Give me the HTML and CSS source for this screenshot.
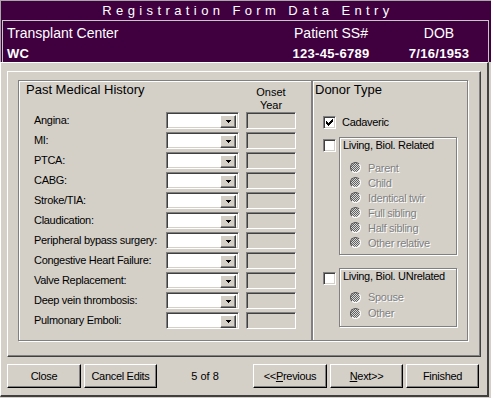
FILE: index.html
```html
<!doctype html>
<html>
    <head>
        <title>Registration Form Data Entry</title>
        <link rel="stylesheet" href="styles.css">
    </head>
    <body>
        <div class="window">
            <header class="banner">
                <h1 class="title">Registration Form Data Entry</h1>
                <div class="patient">
                    <span>Transplant Center</span>
                    <span class="mid">Patient SS#</span>
                    <span class="mid">DOB</span>
                    <b class="value">WC</b>
                    <b class="value mid">123-45-6789</b>
                    <b class="value mid">7/16/1953</b>
                </div>
            </header>

            <div class="form-area">
                <main class="panel">
                    <section class="group history">
                        <h2 class="group-title">Past Medical History</h2>
                        <div class="onset-head">Onset<br>Year</div>

                        <label class="row-label">Angina:</label>
                        <div class="combo"><span class="drop"><svg width="5" height="3"><path d="M0 0h5v1h-1v1h-1v1h-1v-1h-1v-1h-1z"/></svg></span></div>
                        <div class="year"></div>

                        <label class="row-label">MI:</label>
                        <div class="combo"><span class="drop"><svg width="5" height="3"><path d="M0 0h5v1h-1v1h-1v1h-1v-1h-1v-1h-1z"/></svg></span></div>
                        <div class="year"></div>

                        <label class="row-label">PTCA:</label>
                        <div class="combo"><span class="drop"><svg width="5" height="3"><path d="M0 0h5v1h-1v1h-1v1h-1v-1h-1v-1h-1z"/></svg></span></div>
                        <div class="year"></div>

                        <label class="row-label">CABG:</label>
                        <div class="combo"><span class="drop"><svg width="5" height="3"><path d="M0 0h5v1h-1v1h-1v1h-1v-1h-1v-1h-1z"/></svg></span></div>
                        <div class="year"></div>

                        <label class="row-label">Stroke/TIA:</label>
                        <div class="combo"><span class="drop"><svg width="5" height="3"><path d="M0 0h5v1h-1v1h-1v1h-1v-1h-1v-1h-1z"/></svg></span></div>
                        <div class="year"></div>

                        <label class="row-label">Claudication:</label>
                        <div class="combo"><span class="drop"><svg width="5" height="3"><path d="M0 0h5v1h-1v1h-1v1h-1v-1h-1v-1h-1z"/></svg></span></div>
                        <div class="year"></div>

                        <label class="row-label">Peripheral bypass surgery:</label>
                        <div class="combo"><span class="drop"><svg width="5" height="3"><path d="M0 0h5v1h-1v1h-1v1h-1v-1h-1v-1h-1z"/></svg></span></div>
                        <div class="year"></div>

                        <label class="row-label">Congestive Heart Failure:</label>
                        <div class="combo"><span class="drop"><svg width="5" height="3"><path d="M0 0h5v1h-1v1h-1v1h-1v-1h-1v-1h-1z"/></svg></span></div>
                        <div class="year"></div>

                        <label class="row-label">Valve Replacement:</label>
                        <div class="combo"><span class="drop"><svg width="5" height="3"><path d="M0 0h5v1h-1v1h-1v1h-1v-1h-1v-1h-1z"/></svg></span></div>
                        <div class="year"></div>

                        <label class="row-label">Deep vein thrombosis:</label>
                        <div class="combo"><span class="drop"><svg width="5" height="3"><path d="M0 0h5v1h-1v1h-1v1h-1v-1h-1v-1h-1z"/></svg></span></div>
                        <div class="year"></div>

                        <label class="row-label">Pulmonary Emboli:</label>
                        <div class="combo"><span class="drop"><svg width="5" height="3"><path d="M0 0h5v1h-1v1h-1v1h-1v-1h-1v-1h-1z"/></svg></span></div>
                        <div class="year"></div>
                    </section>

                    <section class="group donor">
                        <h2 class="group-title">Donor Type</h2>

                        <div class="check-row cadaveric">
                            <span class="checkbox"><svg width="7" height="7"><path d="M0 2h1v1h1v1h1v-1h1v-1h1v-1h1v-1h1v3h-1v1h-1v1h-1v1h-1v1h-1v-1h-1v-1h-1z"/></svg></span>
                            <span>Cadaveric</span>
                        </div>

                        <div class="check-row option">
                            <span class="checkbox"></span>
                            <div class="subgroup">
                                <div class="subgroup-title">Living, Biol. Related</div>
                                <ul class="radios">
                                    <li><span class="radio"></span>Parent</li>
                                    <li><span class="radio"></span>Child</li>
                                    <li><span class="radio"></span>Identical twir</li>
                                    <li><span class="radio"></span>Full sibling</li>
                                    <li><span class="radio"></span>Half sibling</li>
                                    <li><span class="radio"></span>Other relative</li>
                                </ul>
                            </div>
                        </div>

                        <div class="check-row option unrelated">
                            <span class="checkbox"></span>
                            <div class="subgroup">
                                <div class="subgroup-title">Living, Biol. UNrelated</div>
                                <ul class="radios tall">
                                    <li><span class="radio"></span>Spouse</li>
                                    <li><span class="radio"></span>Other</li>
                                </ul>
                            </div>
                        </div>
                    </section>
                </main>

                <footer class="actions">
                    <button class="btn wide">Close</button>
                    <button class="btn">Cancel Edits</button>
                    <span class="status">5 of 8</span>
                    <button class="btn wide">&lt;&lt;<u>P</u>revious</button>
                    <button class="btn"><u>N</u>ext&gt;&gt;</button>
                    <button class="btn">Finished</button>
                </footer>
            </div>
        </div>
    </body>
</html>
```

FILE: styles.css
```css
:root {
    --face: #d4d0c8;
    --shadow: #808080;
    --dark: #404040;
    --light: #ffffff;
    --purple: #400040;
    --disabled: #808080;
}

body {
    margin: 0;
}

.window {
    width: 491px;
    height: 398px;
    display: flex;
    flex-direction: column;
    background: var(--face);
    font-family: "Liberation Sans", Arial, sans-serif;
    color: #000;
}

/* purple patient banner */
.banner {
    height: 62px;
    box-sizing: border-box;
    background: var(--purple);
    color: #fff;
    border-top: 1px solid #a8a8a8;
    border-left: 1px solid #a8a8a8;
}

.title {
    margin: 0;
    height: 19px;
    font-size: 13px;
    font-weight: normal;
    line-height: 19px;
    letter-spacing: 4.4px;
    padding-left: 4px;
    text-align: center;
}

.patient {
    display: grid;
    grid-template-columns: 1fr 90px 90px;
    grid-auto-rows: 20px;
    column-gap: 18px;
    align-items: center;
    margin: 0 2px 0 1px;
    padding: 2px 4px 0 4px;
    height: 42px;
    box-sizing: border-box;
    border: 1px solid #c8c8c8;
    border-bottom: none;
    font-size: 14px;
}

.patient .mid {
    text-align: center;
}

.patient .value {
    font-size: 13px;
    letter-spacing: 0.3px;
}

/* grey form body */
.form-area {
    flex: 1;
    margin: 0 2px 1px 0;
    padding: 8px 0 0 6px;
    border-top: 1px solid var(--light);
    border-left: 1px solid var(--light);
    border-right: 2px solid var(--dark);
    border-bottom: 2px solid var(--dark);
}

.panel {
    display: flex;
    width: 474px;
    height: 286px;
    box-sizing: border-box;
    padding: 8px 0 0 10px;
    border: 1px solid;
    border-color: var(--light) var(--dark) var(--dark) var(--light);
    box-shadow: inset -1px -1px var(--shadow);
}

.group {
    height: 261px;
    box-sizing: border-box;
    border: 1px solid var(--shadow);
    box-shadow: inset 1px 1px var(--light), 1px 1px var(--light);
}

.group-title {
    margin: 0;
    font-size: 13px;
    font-weight: normal;
    line-height: 16px;
}

.history {
    width: 294px;
    display: grid;
    grid-template-columns: 133px 73px 50px;
    grid-template-rows: 27px;
    grid-auto-rows: 17px;
    column-gap: 7px;
    row-gap: 3px;
    align-content: start;
    padding: 1px 0 0 7px;
}

.history .group-title {
    grid-column: 1 / 3;
}

.onset-head {
    align-self: end;
    margin-bottom: -3px;
    font-size: 11px;
    line-height: 13px;
    text-align: center;
}

.row-label {
    padding-left: 8px;
    font-size: 11px;
    letter-spacing: -0.3px;
    line-height: 17px;
    white-space: nowrap;
}

.combo,
.year {
    box-sizing: border-box;
    border: 1px solid;
    border-color: var(--shadow) var(--light) var(--light) var(--shadow);
    box-shadow: inset 1px 1px var(--dark), inset -1px -1px var(--face);
}

.combo {
    display: flex;
    justify-content: flex-end;
    padding: 2px;
    background: #fff;
}

.drop {
    width: 16px;
    height: 13px;
    box-sizing: border-box;
    display: flex;
    align-items: center;
    justify-content: center;
    background: var(--face);
    border: 1px solid;
    border-color: var(--light) var(--dark) var(--dark) var(--light);
    box-shadow: inset -1px -1px var(--shadow);
}

.drop svg,
.checkbox svg {
    display: block;
}

/* donor type column */
.donor {
    width: 156px;
    display: flex;
    flex-direction: column;
    padding: 1px 0 0 2px;
    font-size: 11px;
    letter-spacing: -0.3px;
}

.donor .group-title {
    letter-spacing: 0;
}

.check-row {
    display: flex;
    align-items: flex-start;
    margin-left: 8px;
}

.cadaveric {
    margin-top: 18px;
    align-items: center;
    gap: 6px;
    line-height: 13px;
}

.option {
    margin-top: 8px;
    gap: 3px;
}

.option .checkbox {
    margin-top: 2px;
}

.unrelated {
    margin-top: 13px;
}

.unrelated .checkbox {
    margin-top: 4px;
}

.checkbox {
    flex: none;
    width: 13px;
    height: 13px;
    box-sizing: border-box;
    display: flex;
    align-items: center;
    justify-content: center;
    background: #fff;
    border: 1px solid;
    border-color: var(--shadow) var(--light) var(--light) var(--shadow);
    box-shadow: inset 1px 1px var(--dark), inset -1px -1px var(--face);
}

.subgroup {
    width: 118px;
    box-sizing: border-box;
    border: 1px solid var(--shadow);
    box-shadow: inset 1px 1px var(--light), 1px 1px var(--light);
}

.subgroup-title {
    padding-left: 3px;
    line-height: 14px;
}

.radios {
    list-style: none;
    margin: 0;
    padding: 8px 0 4px 10px;
    color: var(--disabled);
    text-shadow: 1px 1px var(--light);
}

.radios li {
    display: flex;
    align-items: center;
    gap: 7px;
    height: 15px;
    white-space: nowrap;
}

.radios.tall {
    padding: 6px 0 5px 10px;
}

.radios.tall li {
    height: 16px;
}

.radio {
    flex: none;
    width: 11px;
    height: 11px;
    box-sizing: border-box;
    border-radius: 50%;
    border: 1px solid;
    border-color: #505050 var(--light) var(--light) #505050;
    background: repeating-conic-gradient(#606060 0 25%, #d8d8d8 0 50%) 0 0 / 2px 2px;
}

/* bottom buttons */
.actions {
    display: flex;
    gap: 3px;
    width: 472px;
    margin-top: 7px;
}

.btn {
    width: 73px;
    height: 24px;
    padding: 0;
    box-sizing: border-box;
    font-family: inherit;
    font-size: 11px;
    letter-spacing: -0.3px;
    color: #000;
    background: var(--face);
    border: 1px solid;
    border-color: var(--light) #000 #000 var(--light);
    box-shadow: inset -1px -1px var(--shadow);
}

.btn.wide {
    width: 74px;
}

.status {
    flex: 1;
    font-size: 11px;
    line-height: 24px;
    text-align: center;
}
```
